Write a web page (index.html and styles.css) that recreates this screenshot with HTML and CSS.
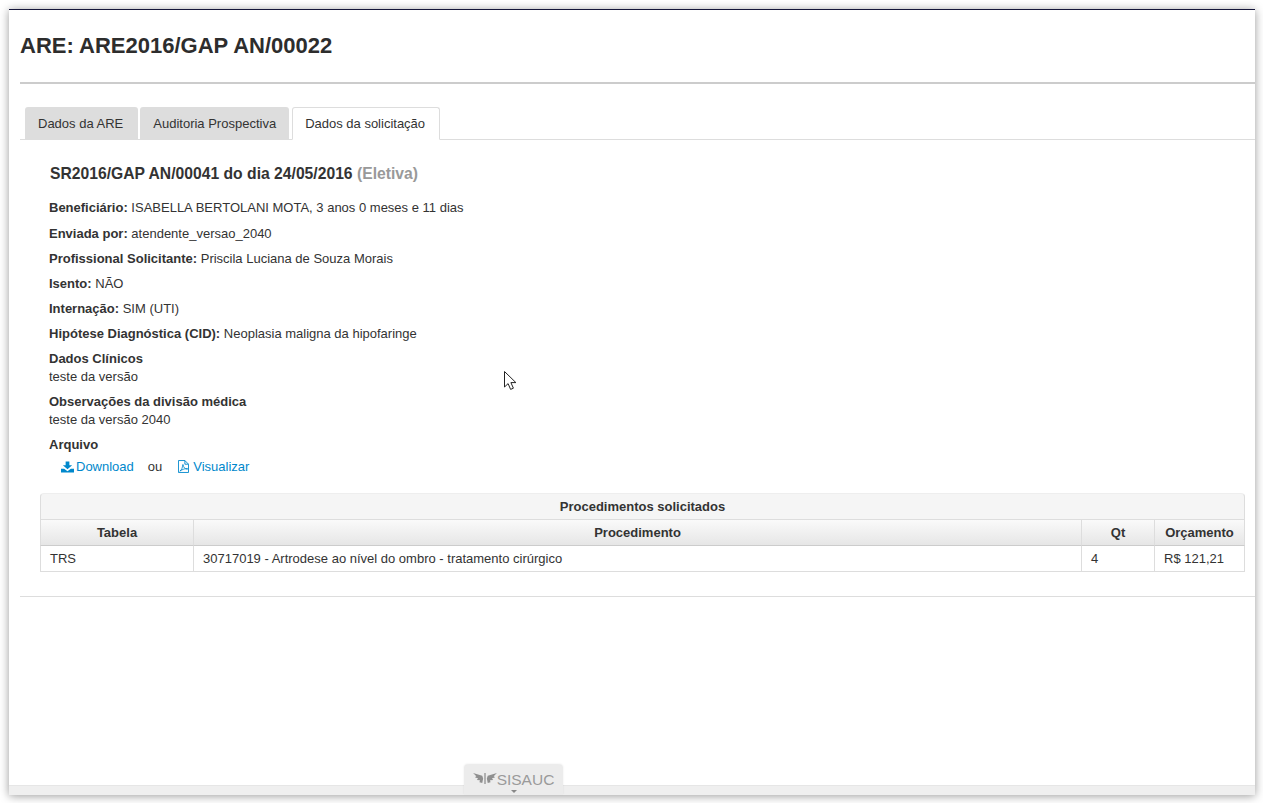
FILE: index.html
```html
<!DOCTYPE html>
<html lang="pt-BR">
<head>
  <meta charset="UTF-8" />
  <title>ARE2016/GAP AN/00022</title>
  <link rel="stylesheet" href="styles.css">
</head>
<body>

<div class="window">
  <h1 class="title">ARE: ARE2016/GAP AN/00022</h1>

  <ul class="tabs">
    <li class="tab">Dados da ARE</li>
    <li class="tab">Auditoria Prospectiva</li>
    <li class="tab active">Dados da solicitação</li>
  </ul>

  <div class="content">
    <h2 class="request">SR2016/GAP AN/00041 do dia 24/05/2016 <span class="muted">(Eletiva)</span></h2>

    <p class="row first"><b>Beneficiário:</b> ISABELLA BERTOLANI MOTA, 3 anos 0 meses e 11 dias</p>
    <p class="row"><b>Enviada por:</b> atendente_versao_2040</p>
    <p class="row"><b>Profissional Solicitante:</b> Priscila Luciana de Souza Morais</p>
    <p class="row"><b>Isento:</b> NÃO</p>
    <p class="row"><b>Internação:</b> SIM (UTI)</p>
    <p class="row"><b>Hipótese Diagnóstica (CID):</b> Neoplasia maligna da hipofaringe</p>

    <div class="block"><b>Dados Clínicos</b><br>teste da versão</div>
    <div class="block"><b>Observações da divisão médica</b><br>teste da versão 2040</div>
    <div class="block last"><b>Arquivo</b></div>

    <div class="files">
      <a class="file" href="#">
        <svg class="icon" viewBox="0 0 14 12" width="13" height="12"><path d="M5 0h4v4h3L7 8.400 2 4h3z"/><path d="M0 8h3.400L7 10.600 10.600 8H14v4H0z"/></svg>Download
      </a>
      <span class="or">ou</span>
      <a class="file" href="#">
        <svg class="icon icon-pdf" viewBox="0 0 12 14" width="11" height="13"><path fill="none" stroke="currentColor" d="M.5.500h7l4 4v9H.5z"/><path fill="none" stroke="currentColor" d="M7.500.500v4h4"/><path fill="none" stroke="currentColor" stroke-width=".9" d="M2 12c2-1 3-4 3-6.500 0-1 .8-1 .8 0C5.800 8 8 10 10 10c1 0 1-.9 0-.9-2 0-5 1-8 2.900z"/></svg>Visualizar
      </a>
    </div>

    <table class="procedures">
      <colgroup>
        <col class="col-table">
        <col>
        <col class="col-qt">
        <col class="col-budget">
      </colgroup>
      <thead>
        <tr><th class="caption" colspan="4">Procedimentos solicitados</th></tr>
        <tr class="heads">
          <th>Tabela</th>
          <th>Procedimento</th>
          <th>Qt</th>
          <th>Orçamento</th>
        </tr>
      </thead>
      <tbody>
        <tr>
          <td>TRS</td>
          <td>30717019 - Artrodese ao nível do ombro - tratamento cirúrgico</td>
          <td>4</td>
          <td>R$ 121,21</td>
        </tr>
      </tbody>
    </table>
  </div>

  <div class="bottom-bar"></div>
  <div class="brand">
    <svg class="wings" viewBox="0 0 26 12" width="24" height="11"><path d="M0 0l10 3 1 3-1 5-3-1 .5-2L4 7.500 5.500 6 2 4.500 3.500 3.500zM26 0l-10 3-1 3 1 5 3-1-.5-2L22 7.500 20.500 6 24 4.500 22.500 3.500z"/><path d="M12.300 0h1.400v12h-1.400z"/></svg>SISAUC
    <span class="caret"></span>
  </div>
</div>

<svg class="cursor" viewBox="0 0 13 20" width="13" height="20"><path fill="#fff" stroke="#222" d="M.5.500v15.500l3.600-3.400 2.500 5.800 2.800-1.200-2.500-5.600h5z"/></svg>

</body>
</html>
```

FILE: styles.css
```css
html, body {
  margin: 0;
  height: 100%;
  background: #fff;
}

body {
  font-family: "Liberation Sans", Arial, sans-serif;
  font-size: 13px;
  color: #333;
  overflow: hidden;
}

.window {
  position: relative;
  box-sizing: border-box;
  height: 786px;
  margin: 9px 8px 0 9px;
  padding-left: 11px;
  background: #fff;
  border-top: 1px solid #15163a;
  box-shadow: 0 1px 9px rgba(0, 0, 0, 0.4);
}

.title {
  margin: 0;
  padding: 23px 0 24px;
  border-bottom: 2px solid #ccc;
  font-size: 22px;
  line-height: 25px;
  color: #2d2d2d;
}

.tabs {
  display: flex;
  gap: 2px;
  margin: 23px 0 0;
  padding: 0 0 0 5px;
  list-style: none;
  border-bottom: 1px solid #ddd;
}

.tab {
  height: 32px;
  margin-bottom: -1px;
  padding: 0 13px;
  background: #ddd;
  border-radius: 3px 3px 0 0;
  line-height: 33px;
}

.tab:first-child {
  padding-right: 15px;
}

.tab.active {
  height: 31px;
  margin-left: 1px;
  padding: 0 14px 0 12px;
  background: #fff;
  border: 1px solid #ddd;
  border-bottom-color: #fff;
  line-height: 31px;
}

.content {
  padding: 0 10px 24px 20px;
  border-bottom: 1px solid #ddd;
}

.request {
  margin: 0;
  padding: 24px 0 15px 10px;
  font-size: 15.7px;
  line-height: 20px;
  color: #333;
}

.muted {
  color: #999;
}

.row,
.block {
  margin: 0 0 7px;
  padding-left: 9px;
  line-height: 18px;
}

.row.first {
  margin-bottom: 8px;
}

.block.last {
  margin-bottom: 3px;
}

.files {
  display: flex;
  align-items: center;
  gap: 14px;
  padding-left: 21px;
  height: 18px;
}

.or {
  margin-right: 2px;
}

.file {
  color: #0088cc;
  text-decoration: none;
}

.icon {
  margin-right: 2px;
  fill: currentColor;
  vertical-align: -2px;
}

.icon-pdf {
  margin-right: 4px;
}

.procedures {
  width: 1205px;
  margin-top: 18px;
  border-collapse: separate;
  border-spacing: 0;
  table-layout: fixed;
}

.procedures th,
.procedures td {
  height: 26px;
  padding: 0 9px;
  box-sizing: border-box;
  border-right: 1px solid #ddd;
  border-bottom: 1px solid #ddd;
  line-height: 18px;
}

.procedures th:first-child,
.procedures td:first-child {
  border-left: 1px solid #ddd;
}

.procedures .caption {
  height: 27px;
  background: #f5f5f5;
  border-top: 1px solid #eee;
  border-radius: 4px 4px 0 0;
}

.heads th {
  background: linear-gradient(#fafafa, #e6e6e6);
  border-bottom-color: #ccc;
}

.procedures td {
  text-align: left;
}

.col-table { width: 154px; }
.col-qt { width: 73px; }
.col-budget { width: 90px; }

.bottom-bar {
  position: absolute;
  left: 0;
  right: 0;
  bottom: 0;
  height: 9px;
  background: #efefef;
  border-top: 1px solid #e6e6e6;
}

.brand {
  position: absolute;
  left: 455px;
  bottom: 0;
  width: 99px;
  height: 30px;
  box-sizing: border-box;
  padding-top: 5px;
  display: flex;
  justify-content: center;
  align-items: flex-start;
  background: #ececec;
  border-radius: 4px 4px 0 0;
  box-shadow: 0 -1px 2px rgba(0, 0, 0, 0.1);
  color: #9a9a9a;
  font-size: 15.5px;
  line-height: 20px;
}

.wings {
  margin-top: 3px;
  fill: #8f8f8f;
}

.caret {
  position: absolute;
  left: 47px;
  bottom: 2px;
  border: 3px solid transparent;
  border-top-color: #888;
  border-bottom: 0;
}

.cursor {
  position: absolute;
  left: 504px;
  top: 371px;
}
```
